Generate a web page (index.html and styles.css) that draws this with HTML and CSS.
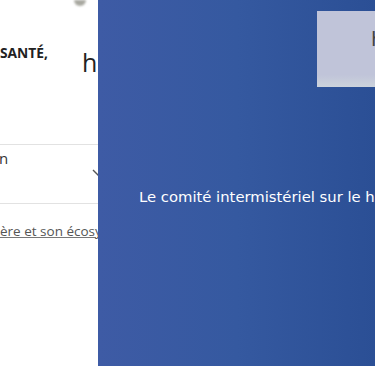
FILE: index.html
```html
<!DOCTYPE html>
<html lang="fr">
<head>
  <meta charset="UTF-8">
  <title>Comité interministériel</title>
  <link rel="stylesheet" href="styles.css">
</head>
<body>

  <!-- Page derrière -->
  <div class="page">
    <div class="logo-mark"></div>

    <div class="header">
      <div class="brand">SANTÉ,</div>
      <h1 class="title">h</h1>
    </div>

    <div class="select-box">
      <span class="select-label">n</span>
      <svg class="chevron" width="12" height="8" viewBox="0 0 12 8">
        <path d="M1 1 L6 6 L11 1" fill="none" stroke="#555" stroke-width="1.4"/>
      </svg>
    </div>

    <a class="link" href="#">ère et son écosystème</a>
  </div>

  <!-- Panneau bleu -->
  <div class="panel">
    <div class="panel-button">h</div>
    <p class="panel-text">Le comité intermistériel sur le handicap</p>
  </div>

</body>
</html>
```

FILE: styles.css
```css
body {
  margin: 0;
  padding: 0;
  width: 375px;
  height: 366px;
  background: white;
  font-family: 'Open Sans', sans-serif;
  overflow: hidden;
  position: relative;
}

.page {
  width: 375px;
}

.logo-mark {
  width: 12px;
  height: 6px;
  margin-left: 74px;
  border-radius: 0 0 6px 6px;
  background: #a8a8a0;
  filter: blur(1px);
}

.header {
  display: flex;
  align-items: flex-start;
  margin-top: 38px;
}

.brand {
  width: 81px;
  font-size: 13.8px;
  font-weight: bold;
  line-height: 18px;
  color: #222;
  flex-shrink: 0;
}

.title {
  margin: 3px 0 0 1px;
  font-size: 25px;
  font-weight: normal;
  line-height: 30px;
  color: #222;
  white-space: nowrap;
}

.select-box {
  display: flex;
  align-items: flex-start;
  justify-content: space-between;
  width: 110px;
  height: 58px;
  margin-top: 67px;
  border-top: 1px solid #e2e2e2;
  border-bottom: 1px solid #e2e2e2;
}

.select-label {
  margin: 3px 0 0 -1px;
  font-size: 15px;
  line-height: 20px;
  color: #333;
}

.chevron {
  margin-top: 24px;
  margin-right: 6px;
}

.link {
  display: block;
  margin-top: 17px;
  font-size: 13.5px;
  line-height: 20px;
  color: #555;
  white-space: nowrap;
  text-decoration: underline;
  text-decoration-color: #777;
}

.panel {
  position: fixed;
  top: 0;
  left: 98px;
  right: 0;
  bottom: 0;
  background: linear-gradient(to right, #3e5ba5, #3559a0 50%, #2b4f95);
  display: flex;
  flex-direction: column;
  overflow: hidden;
}

.panel-button {
  align-self: flex-start;
  margin: 11px 0 0 219px;
  width: 80px;
  height: 76px;
  box-sizing: border-box;
  padding: 16px 0 0 54px;
  background: linear-gradient(to bottom, #c0c4d9 84%, #ccd3dc);
  font-family: 'DejaVu Sans', sans-serif;
  font-size: 20px;
  line-height: 24px;
  color: #444;
  flex-shrink: 0;
}

.panel-text {
  margin: 100px 0 0 41px;
  font-family: 'DejaVu Sans', sans-serif;
  font-size: 14.8px;
  line-height: 20px;
  color: white;
  white-space: nowrap;
}
```
